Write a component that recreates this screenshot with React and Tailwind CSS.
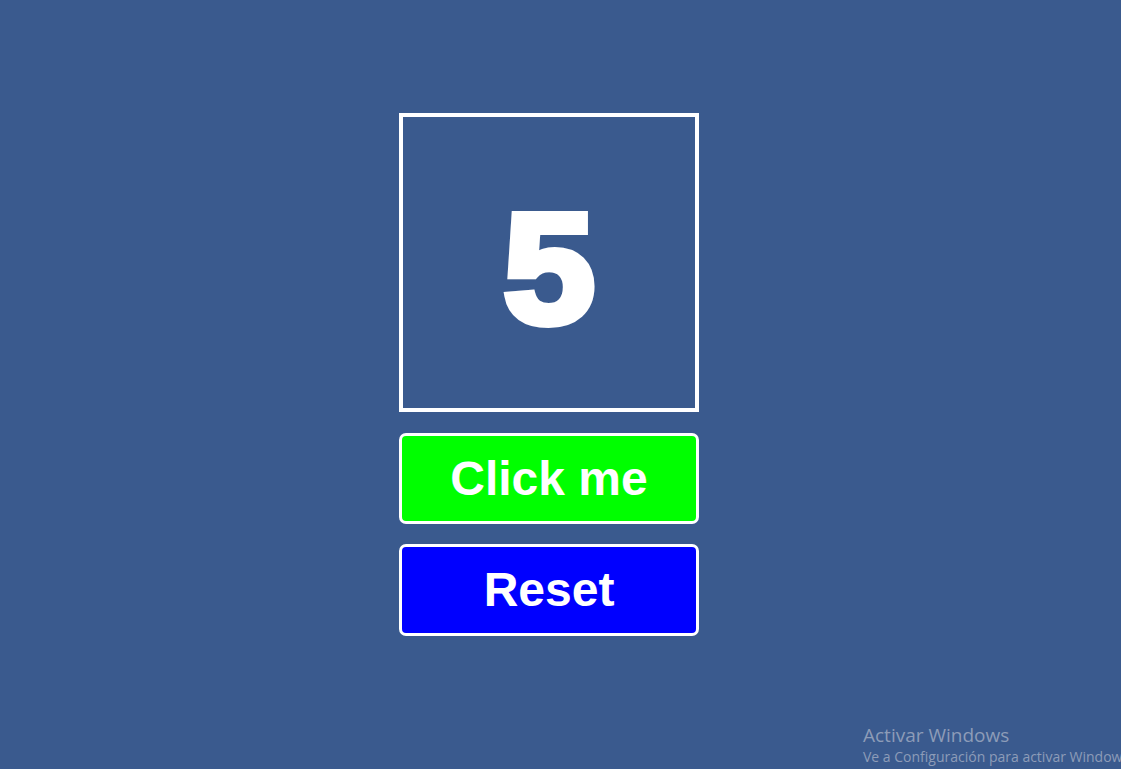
import React, { useState } from 'react';

export default function App() {
  const [count, setCount] = useState(5);

  return (
    <div
      className="relative w-full h-[769px] overflow-hidden bg-[#3a5a8e]"
      style={{ fontFamily: '"Liberation Sans", Arial, sans-serif' }}
    >
      <div className="flex flex-col w-[300px] ml-[399px] pt-[113px]">
        <div className="w-[300px] h-[299px] border-[4px] border-white flex items-center justify-center pt-[12px]">
          <span className="text-white font-bold text-[155px] leading-none scale-x-[1.06] [-webkit-text-stroke:8px_white]">
            {count}
          </span>
        </div>
        <button
          onClick={() => setCount(count + 1)}
          className="mt-[21px] h-[91px] rounded-[7px] border-[3px] border-white bg-[#00ff00] text-white font-bold text-[48px] leading-none"
        >
          Click me
        </button>
        <button
          onClick={() => setCount(0)}
          className="mt-[20px] h-[92px] rounded-[7px] border-[3px] border-white bg-[#0000ff] text-white font-bold text-[48px] leading-none"
        >
          Reset
        </button>
      </div>

      <div
        className="absolute left-[863px] top-[722px] whitespace-nowrap text-[#8d9cb8]"
        style={{ fontFamily: '"Open Sans", "Noto Sans", sans-serif' }}
      >
        <div className="text-[19px] leading-[26px]">Activar Windows</div>
        <div className="text-[14px] leading-[18px]">Ve a Configuración para activar Windows.</div>
      </div>
    </div>
  );
}
